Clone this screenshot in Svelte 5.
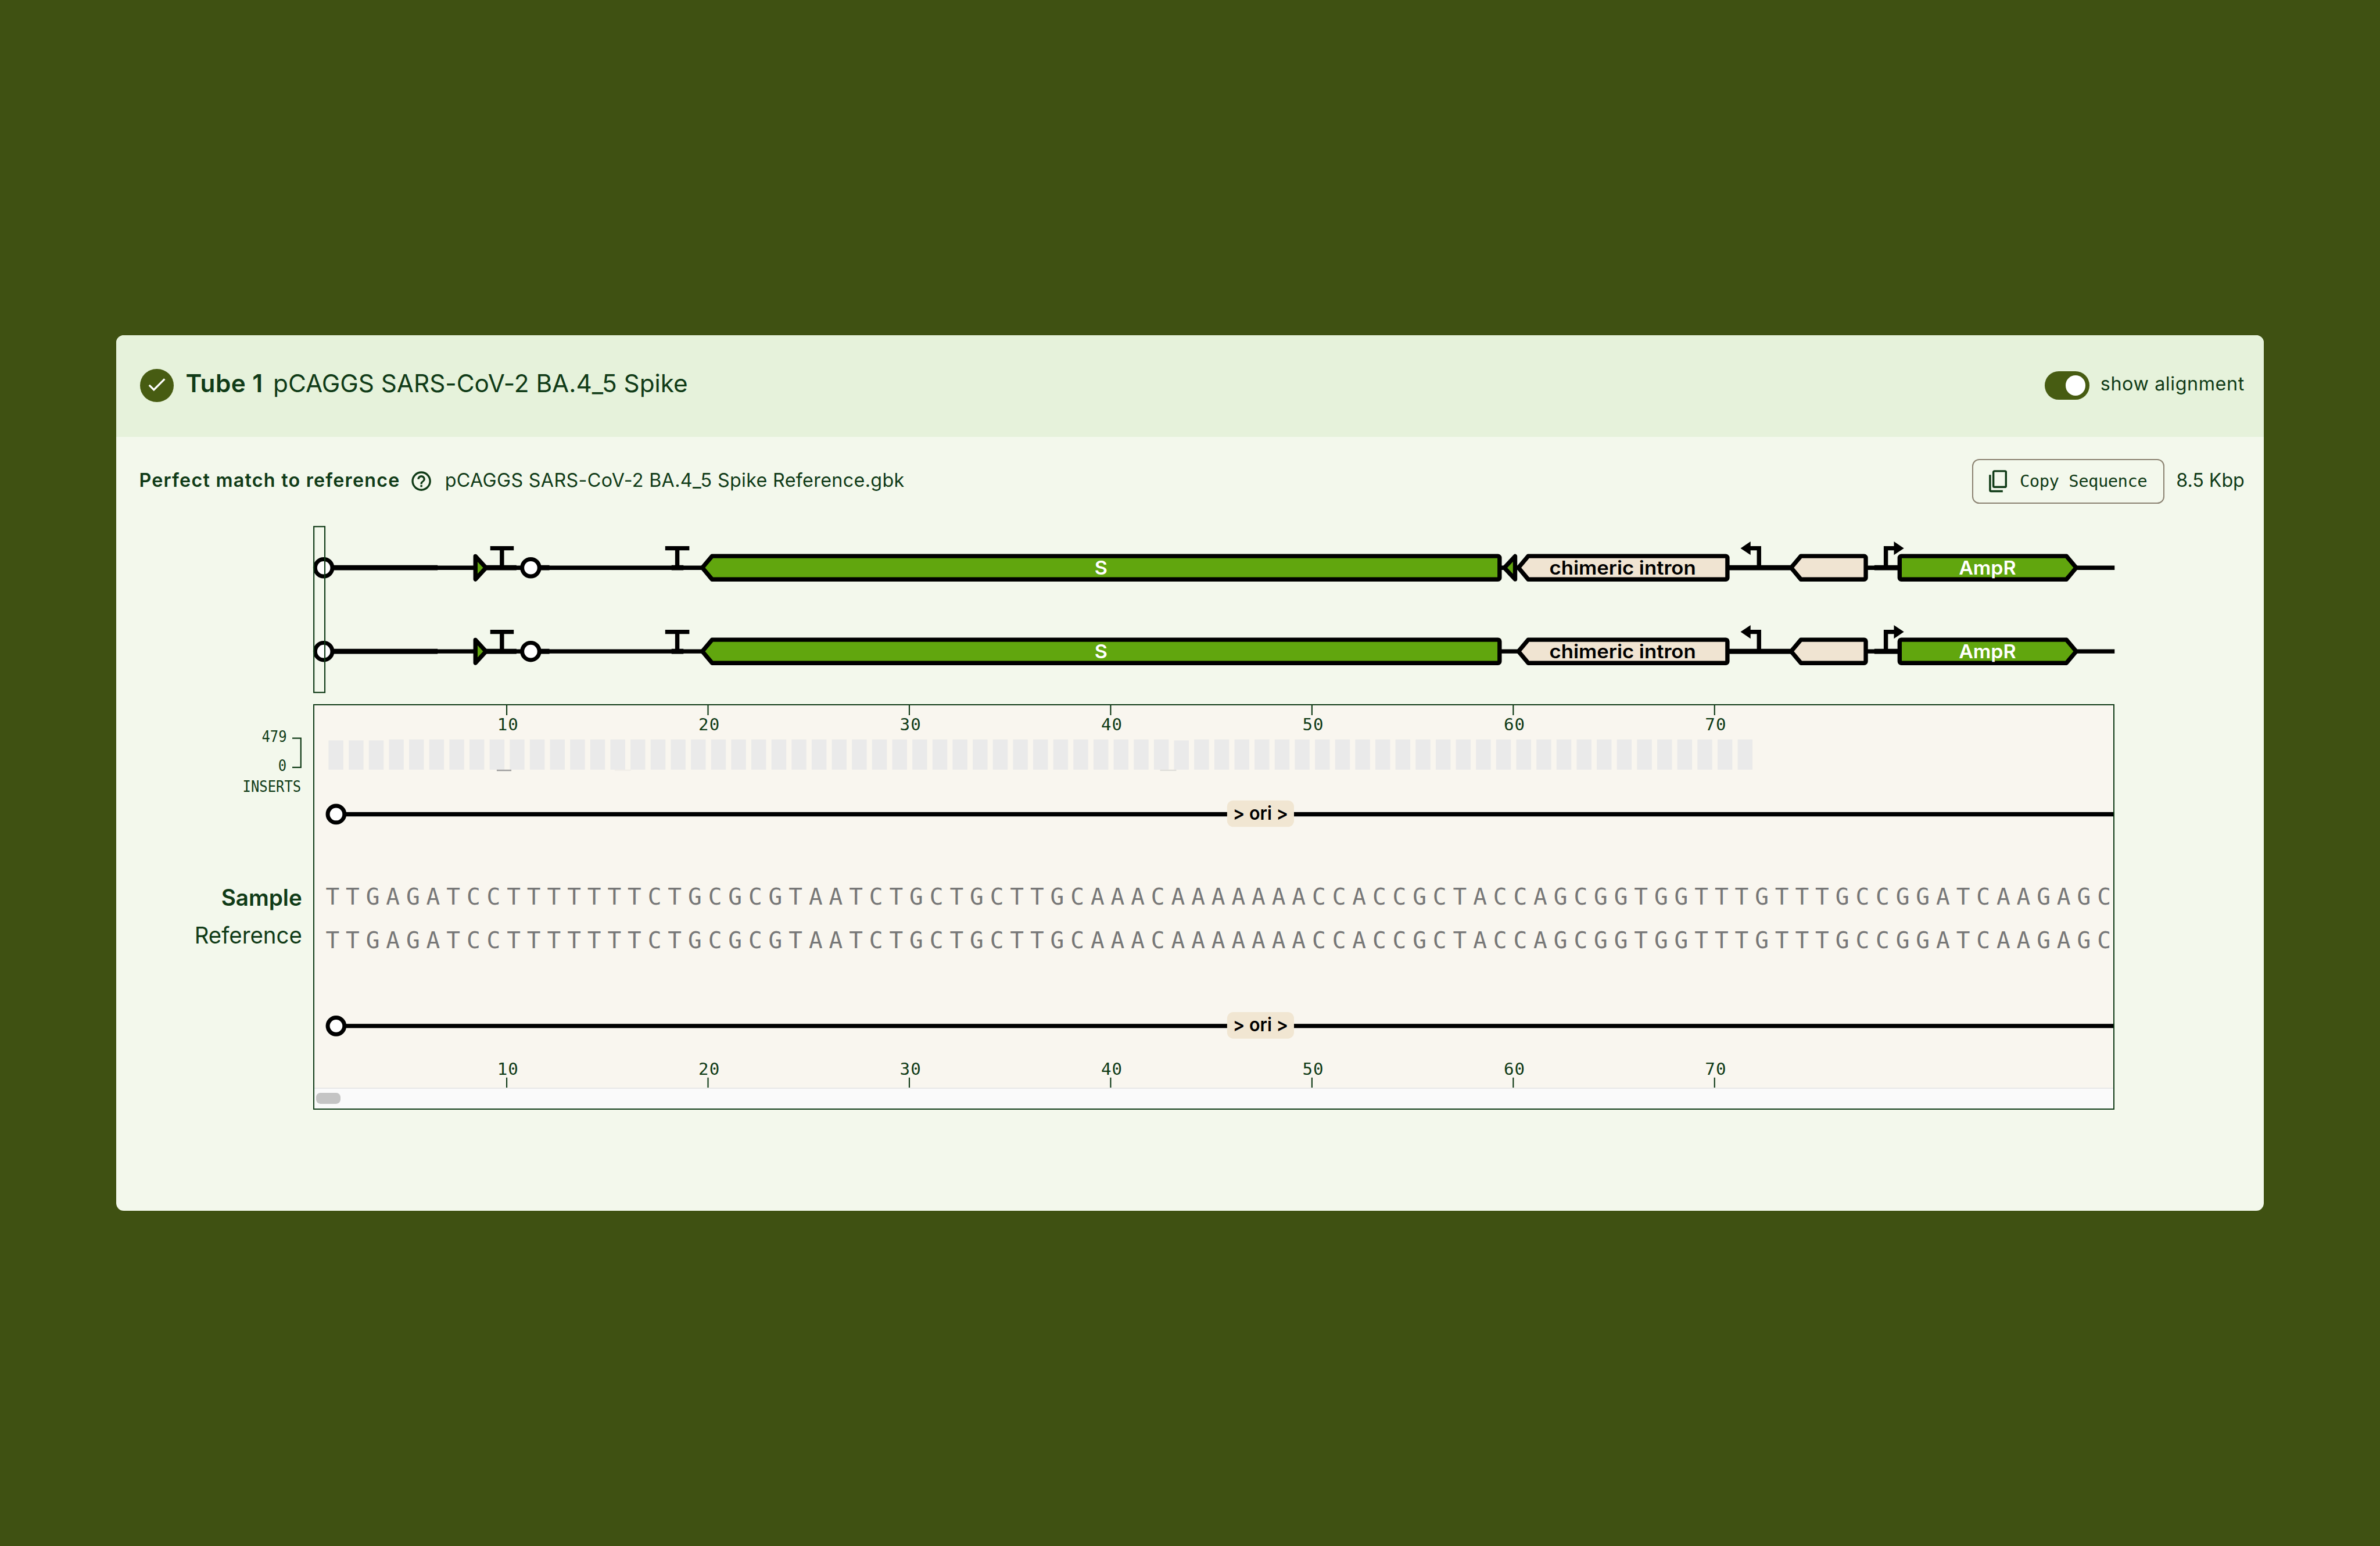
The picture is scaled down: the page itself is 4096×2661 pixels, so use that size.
<script>
  const bases = 'TTGAGATCCTTTTTTTCTGCGCGTAATCTGCTGCTTGCAAACAAAAAAACCACCGCTACCAGCGGTGGTTTGTTTGCCGGATCAAGAGC'.split('');
  const step = 42.19;
  const ticks = [10, 20, 30, 40, 50, 60, 70].map((n, i) => ({ n, x: 1061.6 + i * step * 10 }));
  const bars = Array.from({ length: 71 }, (_, i) => ({ x: 688.2 + i * step, top: i < 3 || i === 42 ? 1552 : 1550 }));
  const oriTracks = [1706.7, 2150.5];
  const seqRows = [1896.4, 1987.1];
  const rows = [
    { dy: 0, gapArrow: true },
    { dy: 175.3, gapArrow: false }
  ];

  // Spreads letters so a label takes exactly `units` (1rem = 100 units).
  function fit(node, units) {
    const rem = parseFloat(getComputedStyle(document.documentElement).fontSize);
    const extra = (units * rem) / 100 - node.getBoundingClientRect().width;
    node.style.letterSpacing = `${extra / node.textContent.length}px`;
  }
</script>

<main>
  <section class="card">
    <header>
      <div class="check">
        <svg viewBox="0 0 24 24"><path d="M9 16.17L4.83 12l-1.42 1.41L9 19 21 7l-1.41-1.41z" /></svg>
      </div>
      <h1><b use:fit={162}>Tube 1</b><span use:fit={869}>pCAGGS SARS-CoV-2 BA.4_5 Spike</span></h1>
      <div class="toggle"><i></i></div>
      <span class="label" use:fit={302}>show alignment</span>
    </header>

    <div class="summary">
      <strong use:fit={547}>Perfect match to reference</strong>
      <svg class="help" viewBox="0 0 24 24"><path d="M11 18h2v-2h-2v2zm1-16C6.48 2 2 6.48 2 12s4.48 10 10 10 10-4.48 10-10S17.52 2 12 2zm0 18c-4.41 0-8-3.59-8-8s3.59-8 8-8 8 3.59 8 8-3.59 8-8 8zm0-14c-2.21 0-4 1.79-4 4h2c0-1.1.9-2 2-2s2 .9 2 2c0 2-3 1.75-3 5h2c0-2.25 3-2.5 3-5 0-2.21-1.79-4-4-4z" /></svg>
      <span class="file" use:fit={963}>pCAGGS SARS-CoV-2 BA.4_5 Spike Reference.gbk</span>
      <button>
        <svg viewBox="0 0 38 47"><path d="M11.5 2.3h22a2.2 2.2 0 0 1 2.2 2.2v29a2.2 2.2 0 0 1-2.2 2.2h-22a2.2 2.2 0 0 1-2.2-2.2v-29a2.2 2.2 0 0 1 2.2-2.2zM2.3 10v32.2a2.2 2.2 0 0 0 2.2 2.2h24.5" /></svg>
        <span use:fit={267}>Copy Sequence</span>
      </button>
      <span class="size" use:fit={143}>8.5 Kbp</span>
    </div>

    <svg class="map" viewBox="656 1098 3776 364">
      {#each rows as row}
        <g transform="translate(0 {row.dy})">
          <g class="ink">
            <path d="M678 1189.6H4431.5" />
            <path class="heavy" d="M678 1189.6H916.7M1018 1189.6H1082M1111 1189.6H1151M1407 1189.6H1432M3620 1189.6H3755M3928 1189.6H3981" />
            <path d="M1027 1148.7H1076.3M1051.5 1148.7V1189.6M1393.7 1148.7H1444.3M1419 1148.7V1189.6" />
            <path d="M3686.2 1189.6V1148.7H3664M3952.1 1189.6V1148.7H3974" />
          </g>
          <path d="M3647.5 1148.7L3668.5 1134.5V1163zM3990 1148.7L3969 1134.5V1163z" />
          <g class="shape">
            <circle class="cut" cx="678" cy="1189.6" r="18" />
            <circle class="cut" cx="1111.9" cy="1189.6" r="18" />
            <path class="gene" d="M996 1165.5L1018 1189.6L996 1213.7z" />
            <path class="gene" d="M1471.5 1189.6L1492 1165.2H3139a3.5 3.5 0 0 1 3.5 3.5V1210.5a3.5 3.5 0 0 1-3.5 3.5H1492z" />
            {#if row.gapArrow}
              <path class="gene" d="M3152.5 1189.6L3175 1165.5V1213.7z" />
            {/if}
            <path class="misc" d="M3182 1189.6L3202.5 1165.2H3616.5a3.5 3.5 0 0 1 3.5 3.5V1210.5a3.5 3.5 0 0 1-3.5 3.5H3202.5z" />
            <path class="misc" d="M3753.5 1189.6L3774 1165.2H3906.5a3.5 3.5 0 0 1 3.5 3.5V1210.5a3.5 3.5 0 0 1-3.5 3.5H3774z" />
            <path class="gene" d="M4351 1189.6L4330.5 1165.2H3984.500a3.5 3.5 0 0 0-3.5 3.5V1210.5a3.5 3.5 0 0 0 3.5 3.5H4330.5z" />
          </g>
          <text class="name light" x="2293.500" y="1204" textLength="27" lengthAdjust="spacingAndGlyphs">S</text>
          <text class="name" x="3247" y="1204" textLength="307" lengthAdjust="spacingAndGlyphs">chimeric intron</text>
          <text class="name light" x="4105" y="1204" textLength="120" lengthAdjust="spacingAndGlyphs">AmpR</text>
        </g>
      {/each}
      <rect class="window" x="657.3" y="1103.3" width="23" height="347.7" />
    </svg>

    <div class="viewer">
      <svg class="gutter" viewBox="244 1476 412 849.7">
        <g class="axis">
          <text x="549" y="1554.7" textLength="52.5" lengthAdjust="spacingAndGlyphs">479</text>
          <text x="583.5" y="1615.7" textLength="17.5" lengthAdjust="spacingAndGlyphs">0</text>
          <text x="509" y="1660" textLength="122.5" lengthAdjust="spacingAndGlyphs">INSERTS</text>
          <path d="M613 1547.5H631V1608.7H613" />
        </g>
        <text class="row strong" x="464" y="1898.9" textLength="169.500" lengthAdjust="spacingAndGlyphs">Sample</text>
        <text class="row" x="408" y="1977.5" textLength="225.500" lengthAdjust="spacingAndGlyphs">Reference</text>
      </svg>

      <div class="panel">
        <svg viewBox="658.436 1478.436 3770.6 800.6">
          {#each ticks as t}
            <path class="tick" d="M{t.x} 1478V1499M{t.x} 2258.6V2280" />
            <text class="num" x={t.x - 20} y="1531" textLength="44">{t.n}</text>
            <text class="num" x={t.x - 20} y="2252.5" textLength="44">{t.n}</text>
          {/each}
          {#each bars as b}
            <rect class="bar" x={b.x} y={b.top} width="31" height={1613.3 - b.top} />
          {/each}
          <rect class="insert" x="1040.7" y="1613.3" width="30.6" height="3" />
          <rect class="insert faint" x="2431" y="1613.3" width="34" height="2.6" />
          <rect class="insert trace" x="1288" y="1613.3" width="34" height="2" />

          {#each oriTracks as y}
            <g transform="translate(0 {y})">
              <path class="backbone" d="M704 0H4440" />
              <circle class="cut" cx="704" cy="0" r="17.5" />
              <rect class="pill" x="2571.4" y="-29" width="140.2" height="55.6" rx="13" />
              <text class="ori" x="2583.500" y="11.7" textLength="116" lengthAdjust="spacingAndGlyphs">&gt; ori &gt;</text>
            </g>
          {/each}
          {#each seqRows as y}
            {#each bases as base, i}
              <text class="base" x={696.5 + i * step} {y}>{base}</text>
            {/each}
          {/each}
        </svg>
        <div class="scroll"><i></i></div>
      </div>
    </div>
  </section>
</main>

<style>
  :global(html) { font-size: 82.117px; }
  :global(body) { margin: 0; background: #3f5112; overflow: hidden; }
  main {
    height: 100vh;
    display: flex;
    align-items: center;
    justify-content: center;
    font-family: Inter, Roboto, sans-serif;
    color: #103b17;
    background: #3f5112;
  }
  .card {
    width: 45rem;
    height: 18.36rem;
    border-radius: 0.16rem;
    overflow: hidden;
    background: #f3f8ec;
  }
  svg { display: block; flex: none; }
  header {
    box-sizing: border-box;
    height: 2.13rem;
    padding: 0 0.4rem 0 0.5rem;
    display: flex;
    align-items: center;
    background: #e6f2db;
  }
  header span, header b, .summary span, .summary strong { white-space: nowrap; }
  .check {
    width: 0.7rem;
    height: 0.7rem;
    border-radius: 50%;
    background: #475c12;
    display: grid;
    place-items: center;
    margin-bottom: 0.02rem;
  }
  .check svg { width: 0.48rem; height: 0.48rem; fill: #fff; margin-bottom: 0.03rem; }
  h1 {
    display: flex;
    gap: 0.215rem;
    margin: 0 auto 0 0.25rem;
    padding-bottom: 0.1rem;
    font-size: 0.515rem;
    font-weight: 400;
    line-height: 1.2;
  }
  h1 b { font-weight: 600; }
  .toggle {
    box-sizing: border-box;
    width: 0.935rem;
    height: 0.59rem;
    padding: 0 0.08rem;
    border-radius: 0.295rem;
    background: #475c12;
    display: flex;
    align-items: center;
    justify-content: flex-end;
    margin-bottom: 0.02rem;
  }
  .toggle i { width: 0.42rem; height: 0.42rem; border-radius: 50%; background: #fff; }
  .label { font-size: 0.393rem; margin-left: 0.23rem; padding-bottom: 0.08rem; }
  .summary {
    box-sizing: border-box;
    height: 1.403rem;
    padding: 0.47rem 0.4rem 0 0.475rem;
    display: flex;
    align-items: center;
    font-size: 0.393rem;
  }
  .summary strong { font-weight: 600; padding-bottom: 0.05rem; }
  .help { width: 0.49rem; height: 0.49rem; margin: 0 0.25rem 0 0.2rem; fill: #103b17; }
  .file { padding-bottom: 0.05rem; }
  button {
    box-sizing: border-box;
    width: 4.03rem;
    height: 0.933rem;
    margin-left: auto;
    padding: 0 0 0 0.325rem;
    display: flex;
    align-items: center;
    gap: 0.265rem;
    border: 0.026rem solid #8b8271;
    border-radius: 0.15rem;
    background: none;
    color: inherit;
    font: 0.352rem 'DejaVu Sans Mono', monospace;
  }
  button svg { width: 0.38rem; height: 0.47rem; fill: none; stroke: #103b17; stroke-width: 4.2; }
  .size { margin-left: 0.245rem; padding-bottom: 0.05rem; }
  .map {
    width: 37.76rem;
    height: 3.64rem;
    margin: 0.427rem 0 0.14rem 4.12rem;
    overflow: visible;
  }
  .ink path, .backbone { fill: none; stroke: #000; stroke-width: 9; }
  .ink .heavy { stroke-width: 10.6; }
  .shape > * { stroke: #000; stroke-width: 9; stroke-linejoin: round; }
  .cut { fill: #fff; stroke: #000; stroke-width: 8.5; }
  .gene { fill: #61a60e; }
  .misc { fill: #f0e4d2; }
  .name { font-size: 39.5px; font-weight: 600; }
  .light { fill: #fff; }
  .window { fill: none; stroke: #103b17; stroke-width: 2.6; }
  .viewer { display: flex; }
  .gutter { width: 4.12rem; height: 8.497rem; fill: #103b17; }
  .axis { font: 32px 'DejaVu Sans Mono', monospace; }
  .axis path { fill: none; stroke: #103b17; stroke-width: 2.7; }
  .row { font-size: 47.5px; }
  .strong { font-weight: 600; }
  .panel {
    box-sizing: border-box;
    width: 37.755rem;
    height: 8.497rem;
    display: flex;
    flex-direction: column;
    border: 0.028rem solid #103b17;
    background: #f9f6ef;
    overflow: hidden;
  }
  .panel svg { width: 37.706rem; height: 8.006rem; }
  .tick { stroke: #103b17; stroke-width: 2.6; }
  .num { font: 35.5px 'DejaVu Sans Mono', monospace; fill: #103b17; }
  .bar { fill: #eaeaea; }
  .insert { fill: #a0a0a0; }
  .faint { fill: #deddd9; }
  .trace { fill: #eeebe6; }
  .pill { fill: #f1e6d2; }
  .ori { font-size: 39.5px; font-weight: 600; }
  .base { font: 48px 'DejaVu Sans Mono', monospace; fill: #777; text-anchor: middle; }
  .scroll {
    box-sizing: border-box;
    flex: 1;
    padding-left: 0.035rem;
    display: flex;
    align-items: center;
    border-top: 0.03rem solid #e8e8e8;
    background: #fafafa;
  }
  .scroll i { width: 0.52rem; height: 0.23rem; border-radius: 0.09rem; background: #c4c4c4; }
</style>
